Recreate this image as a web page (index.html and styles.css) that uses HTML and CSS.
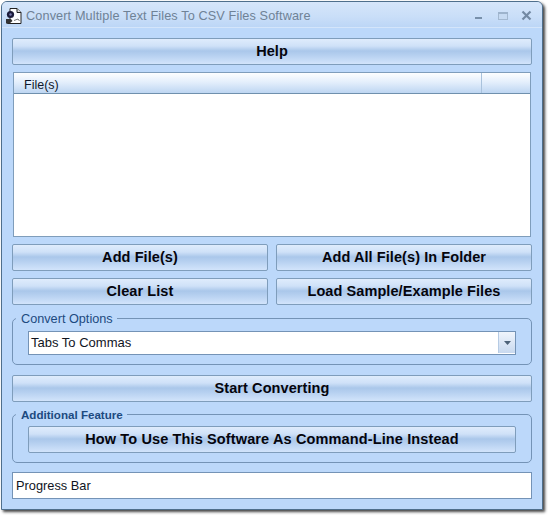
FILE: index.html
```html
<!DOCTYPE html>
<html lang="en">
<head>
<meta charset="utf-8">
<title>Convert Multiple Text Files To CSV Files Software</title>
<link rel="stylesheet" href="styles.css">
</head>
<body>
<div class="window">
  <div class="titlebar">
    <svg class="appicon" width="18" height="18" viewBox="0 0 18 18">
      <path d="M5 1.500h7l4 4v11H2.500l2.500-3z" fill="#fff" stroke="#222" stroke-width="1"/>
      <path d="M12 1.500v4h4" fill="#ddd" stroke="#222" stroke-width="1"/>
      <circle cx="5.500" cy="7.500" r="3.600" fill="#1c1c3a"/>
      <circle cx="5.500" cy="7.500" r="1.200" fill="#7a7ab0"/>
      <path d="M1 12h5l1.500 2-3 2.500H1z" fill="#333"/>
      <path d="M9 13.500l4-1.500 1.500 2" fill="none" stroke="#777" stroke-width="1"/>
    </svg>
    <span class="title">Convert Multiple Text Files To CSV Files Software</span>
    <div class="controls">
      <svg width="14" height="14" viewBox="0 0 14 14"><rect x="3" y="8" width="7" height="2" fill="#7890aa"/></svg>
      <svg width="14" height="14" viewBox="0 0 14 14"><rect x="2.500" y="3.500" width="9" height="7" fill="#c6daf2" stroke="#a3b8d0"/><rect x="2" y="3" width="10" height="2" fill="#9db3cc"/></svg>
      <svg width="14" height="14" viewBox="0 0 14 14"><path d="M2.500 2.500l8 8M10.500 2.500l-8 8" stroke="#7389a3" stroke-width="2.200" fill="none"/></svg>
    </div>
  </div>
  <main class="client">
    <button class="btn btn-help" type="button">Help</button>
    <div class="list">
      <div class="list-head"><span class="col-files">File(s)</span><span class="col-rest"></span></div>
      <div class="list-body"></div>
    </div>
    <div class="btn-grid">
      <button class="btn" type="button">Add File(s)</button>
      <button class="btn" type="button">Add All File(s) In Folder</button>
      <button class="btn" type="button">Clear List</button>
      <button class="btn" type="button">Load Sample/Example Files</button>
    </div>
    <fieldset class="group group-options">
      <legend>Convert Options</legend>
      <div class="select">
        <span class="select-value">Tabs To Commas</span>
        <span class="select-arrow"><svg width="7" height="4" viewBox="0 0 7 4"><path d="M0 0h7L3.500 4z" fill="#4d6278"/></svg></span>
      </div>
    </fieldset>
    <button class="btn btn-start" type="button">Start Converting</button>
    <fieldset class="group group-extra">
      <legend>Additional Feature</legend>
      <button class="btn btn-cmd" type="button">How To Use This Software As Command-Line Instead</button>
    </fieldset>
    <div class="progress">Progress Bar</div>
  </main>
</div>
</body>
</html>
```
FILE: styles.css
```css
* { box-sizing: border-box; }
html, body { margin: 0; padding: 0; background: #fff; }
body { width: 550px; height: 517px; overflow: hidden; font-family: "Liberation Sans", Arial, sans-serif; }
.window {
  width: 542px; height: 509px; margin: 1px 0 0 1px;
  border: 1px solid #4f6f8c; border-radius: 6px 6px 0 0;
  background: #bcd8fa; box-shadow: 2px 2px 3px #444;
  display: flex; flex-direction: column; overflow: hidden;
}
.titlebar {
  height: 26px; flex: none; display: flex; align-items: center; padding: 3px 8px 0 3px;
  background: linear-gradient(#d6e6fa, #c9def8 60%, #bcd6f6);
  border-bottom: 1px solid #d4e5fa;
}
.appicon { flex: none; margin-right: 3px; }
.title { font-size: 12.700px; color: #6f8296; white-space: nowrap; letter-spacing: 0.120px; }
.controls { margin-left: auto; display: flex; gap: 10px; }
.client { flex: 1; padding: 10px 10px 0 10px; display: flex; flex-direction: column; }
.btn {
  display: block; width: 100%; height: 27px; padding: 0 0 1px;
  border: 1px solid #7f9dbb; border-radius: 2px;
  background: linear-gradient(#dfecfc 0%, #cfe1f8 28%, #aac7ea 48%, #b6d0f0 65%, #d2e4fb 100%);
  font-family: "Liberation Sans", Arial, sans-serif; font-weight: 700; font-size: 14.500px; letter-spacing: 0.080px; color: #05050c;
}
.btn-help { flex: none; }
.list {
  margin: 7px 1px 0; height: 165px; flex: none; border: 1px solid #7f9dbb; background: #fff;
  display: flex; flex-direction: column;
}
.list-head {
  height: 21px; flex: none; display: flex; border-bottom: 1px solid #6f90ad;
  background: linear-gradient(#fdfeff, #e4effc 45%, #bed6f2);
  font-size: 12.500px; color: #10182a; align-items: center;
}
.col-files { width: 468px; height: 100%; padding: 5px 0 0 10px; border-right: 1px solid #a9c2dc; }
.col-rest { flex: 1; }
.list-body { flex: 1; }
.btn-grid { margin-top: 7px; display: grid; grid-template-columns: 256px 256px; column-gap: 8px; row-gap: 7px; }
.group {
  margin: 0; min-width: 0; flex: none; border: 1px solid #7493b6; border-radius: 5px; padding: 0 15px;
}
.group legend { margin-left: -12px; padding: 2px 4px 0 5px; font-size: 12.700px; font-weight: 400; color: #1c4a80; line-height: 14px; }
.group-options { margin-top: 5px; height: 55px; padding-top: 5px; }
.group-extra { margin-top: 4px; height: 57px; padding-top: 4px; }
.group-extra legend { font-size: 11.600px; font-weight: 700; }
.select {
  height: 24px; display: flex; border: 1px solid #7493b6; background: #fff; align-items: center;
  font-size: 13px; color: #10141e; padding-bottom: 1px;
}
.select-value { flex: 1; padding-left: 2px; }
.select-arrow {
  width: 17px; height: 100%; display: flex; align-items: center; justify-content: center;
  background: linear-gradient(#f0f5fc, #c8d9ef); border-left: 1px solid #b6cbe4;
}
.btn-start { margin-top: 10px; flex: none; }
.btn-cmd { letter-spacing: 0.130px; }
.progress {
  margin-top: 9px; height: 27px; flex: none; border: 1px solid #7493b6; background: #fff;
  font-size: 12.800px; color: #10141e; padding: 5px 0 0 3px;
}
```
